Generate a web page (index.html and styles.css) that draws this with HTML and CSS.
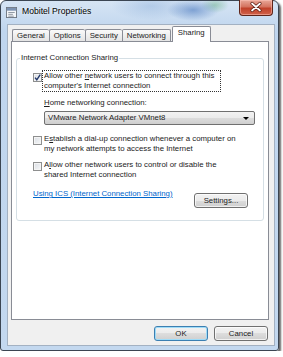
FILE: index.html
```html
<!DOCTYPE html>
<html lang="en">
<head>
    <meta charset="UTF-8">
    <title>Mobitel Properties</title>
    <link rel="stylesheet" href="styles.css">
</head>
<body>
    <div class="window">
        <div class="titlebar">
            <svg class="app-icon" width="12" height="12" viewBox="0 0 12 12">
                <rect x="0.5" y="0.5" width="11" height="11" fill="#f4f6f8" stroke="#6d7580"/>
                <rect x="1" y="1" width="10" height="3" fill="#7d93b2"/>
                <path d="M2.5 6h7M2.5 8h5M2.5 10h6" stroke="#8a929c" stroke-width="1"/>
            </svg>
            <span class="title">Mobitel Properties</span>
            <div class="close">
                <svg width="34" height="16" viewBox="0 0 34 16">
                    <path d="M13 4.5l8 7M21 4.5l-8 7" stroke="#5a1c12" stroke-width="3.2" stroke-linecap="round"/>
                    <path d="M13 4.5l8 7M21 4.5l-8 7" stroke="#ffffff" stroke-width="1.7" stroke-linecap="round"/>
                </svg>
            </div>
        </div>

        <div class="client">
            <div class="tabs">
                <div class="tab">General</div>
                <div class="tab">Options</div>
                <div class="tab">Security</div>
                <div class="tab">Networking</div>
                <div class="tab selected">Sharing</div>
            </div>

            <div class="panel">
                <fieldset class="group">
                    <legend>Internet Connection Sharing</legend>
                    <div class="group-body">
                        <div class="check-row first">
                            <span class="checkbox">
                                <svg width="9" height="9" viewBox="0 0 9 9">
                                    <path d="M2 4.6l1.8 2.2L7.2 1.6" fill="none" stroke="#23396b" stroke-width="1.4"/>
                                </svg>
                            </span>
                            <span class="check-label focused">Allow other <u>n</u>etwork users to connect through this<br>computer's Internet connection</span>
                        </div>

                        <div class="field-label"><u>H</u>ome networking connection:</div>
                        <div class="select">
                            <span>VMware Network Adapter VMnet8</span>
                            <span class="arrow"></span>
                        </div>

                        <div class="check-row second">
                            <span class="checkbox"></span>
                            <span class="check-label">E<u>s</u>tablish a dial-up connection whenever a computer on<br>my network attempts to access the Internet</span>
                        </div>

                        <div class="check-row third">
                            <span class="checkbox"></span>
                            <span class="check-label">A<u>l</u>low other network users to control or disable the<br>shared Internet connection</span>
                        </div>

                        <div class="link-row">
                            <a class="link" href="#">Using ICS (Internet Connection Sharing)</a>
                            <button class="btn settings">Settings...</button>
                        </div>
                    </div>
                </fieldset>
            </div>

            <div class="buttons">
                <button class="btn default">OK</button>
                <button class="btn">Cancel</button>
            </div>
        </div>
    </div>
</body>
</html>
```

FILE: styles.css
```css
body {
    margin: 0;
    background: #fff;
    font-family: "Liberation Sans", Arial, sans-serif;
    font-size: 7.8px;
    color: #1b1b1b;
}

.window {
    box-sizing: border-box;
    width: 279px;
    height: 351px;
    border: 1px solid #3b4552;
    border-radius: 6px 6px 3px 3px;
    box-shadow: 2px 2px 2px rgba(0, 0, 0, 0.6);
    display: flex;
    flex-direction: column;
    background:
        radial-gradient(ellipse 26px 11px at 192px 9px, rgba(60, 110, 185, 0.55), transparent),
        radial-gradient(ellipse 14px 8px at 214px 4px, rgba(90, 170, 120, 0.45), transparent),
        radial-gradient(ellipse 40px 14px at 150px 5px, rgba(120, 160, 210, 0.35), transparent),
        linear-gradient(#d6e4f4, #bfd5ee 30px, #c3d8ef);
}

/* title bar */
.titlebar {
    height: 23px;
    flex: none;
    display: flex;
    align-items: flex-start;
}
.app-icon {
    margin: 6px 0 0 5px;
    width: 11px;
    height: 11px;
}
.title {
    margin: 5px 0 0 5px;
    font-size: 8.6px;
    line-height: 10px;
    color: #000;
    text-shadow: 0 0 3px rgba(255, 255, 255, 0.9);
}
.close {
    margin: -1px 5px 0 auto;
    width: 34px;
    height: 16px;
    box-sizing: border-box;
    border: 1px solid #5e2419;
    border-top: none;
    border-radius: 0 0 4px 4px;
    background: linear-gradient(#e8a899, #d4735f 45%, #c0412a 55%, #d0624a);
    box-shadow: inset 0 0 0 1px rgba(255, 200, 190, 0.5);
}
.close svg {
    display: block;
    margin: -1px 0 0 -1px;
}

/* client area */
.client {
    box-sizing: border-box;
    height: 322px;
    margin: 0 3px 4px 6px;
    border: 1px solid #a3b1c2;
    background: #f0f0f0;
    padding: 2px 5px 0 3px;
    display: flex;
    flex-direction: column;
}

.tabs {
    display: flex;
    align-items: flex-end;
    padding-left: 1px;
    height: 14px;
}
.tab {
    border: 1px solid #898c95;
    border-bottom: none;
    border-right: none;
    padding: 0 4px;
    line-height: 11px;
    background: linear-gradient(#fafafa, #e4e4e4);
    border-radius: 2px 2px 0 0;
}
.tab:nth-child(4) {
    border-right: 1px solid #898c95;
}
.tab.selected {
    position: relative;
    z-index: 1;
    margin: 0 0 -1px 1px;
    padding: 0 5px 4px;
    background: #fff;
    border-right: 1px solid #898c95;
}

.panel {
    box-sizing: border-box;
    height: 279px;
    border: 1px solid #898c95;
    background: #fff;
    display: flex;
    flex-direction: column;
    align-items: flex-start;
}

.group {
    box-sizing: border-box;
    width: 248px;
    margin: 11px 0 0 4px;
    padding: 0 0 12px 3px;
    border: 1px solid #d5dfe5;
    border-radius: 3px;
    min-width: 0;
}
.group legend {
    padding: 0 1px;
    line-height: 10px;
}
.group-body {
    padding: 0 8px 0 13px;
    display: flex;
    flex-direction: column;
}

.check-row {
    display: flex;
    align-items: flex-start;
    margin-top: 6px;
}
.check-row.first {
    margin-top: 8px;
}
.check-row.second {
    margin-top: 9px;
}
.checkbox {
    box-sizing: border-box;
    width: 9px;
    height: 9px;
    margin-top: 2px;
    border: 1px solid #8e8f8f;
    background: linear-gradient(135deg, #d9dde3, #f7f8f9);
    box-shadow: inset 0 0 0 1px #f4f4f4;
    flex: none;
}
.checkbox svg {
    display: block;
    margin: -1px 0 0 -1px;
}
.check-label {
    white-space: nowrap;
    line-height: 10px;
    border: 1px dotted transparent;
    margin: -1px 0;
    padding: 0 1px;
}
.check-label.focused {
    border-color: #333;
    padding-right: 6px;
}

.field-label {
    margin: 7px 0 0 11px;
    line-height: 10px;
}
.select {
    box-sizing: border-box;
    height: 14px;
    margin: 3px 0 0 11px;
    padding: 0 5px 0 3px;
    border: 1px solid #707070;
    border-radius: 2px;
    background: linear-gradient(#f3f3f3, #ebebeb 50%, #dddddd 50%, #cfcfcf);
    display: flex;
    align-items: center;
    justify-content: space-between;
    line-height: 12px;
}
.arrow {
    width: 0;
    height: 0;
    border-left: 3px solid transparent;
    border-right: 3px solid transparent;
    border-top: 3px solid #000;
}

.link-row {
    display: flex;
    align-items: flex-start;
    margin-top: 9px;
}
.link {
    color: #0066cc;
    line-height: 10px;
    text-decoration: underline;
}

.btn {
    box-sizing: border-box;
    width: 54px;
    height: 15px;
    padding: 0;
    border: 1px solid #707070;
    border-radius: 3px;
    background: linear-gradient(#f2f2f2, #ebebeb 50%, #dddddd 50%, #cfcfcf);
    box-shadow: inset 0 0 0 1px rgba(255, 255, 255, 0.7);
    font-family: inherit;
    font-size: 7.8px;
    color: #1b1b1b;
    line-height: 13px;
}
.btn.settings {
    margin: 4px 7px 0 auto;
}
.btn.default {
    border-color: #3c7fb1;
    box-shadow: inset 0 0 0 1px #9fdcf8;
}

.buttons {
    display: flex;
    justify-content: flex-end;
    gap: 6px;
    margin: 6px 1px 0 0;
}
```
